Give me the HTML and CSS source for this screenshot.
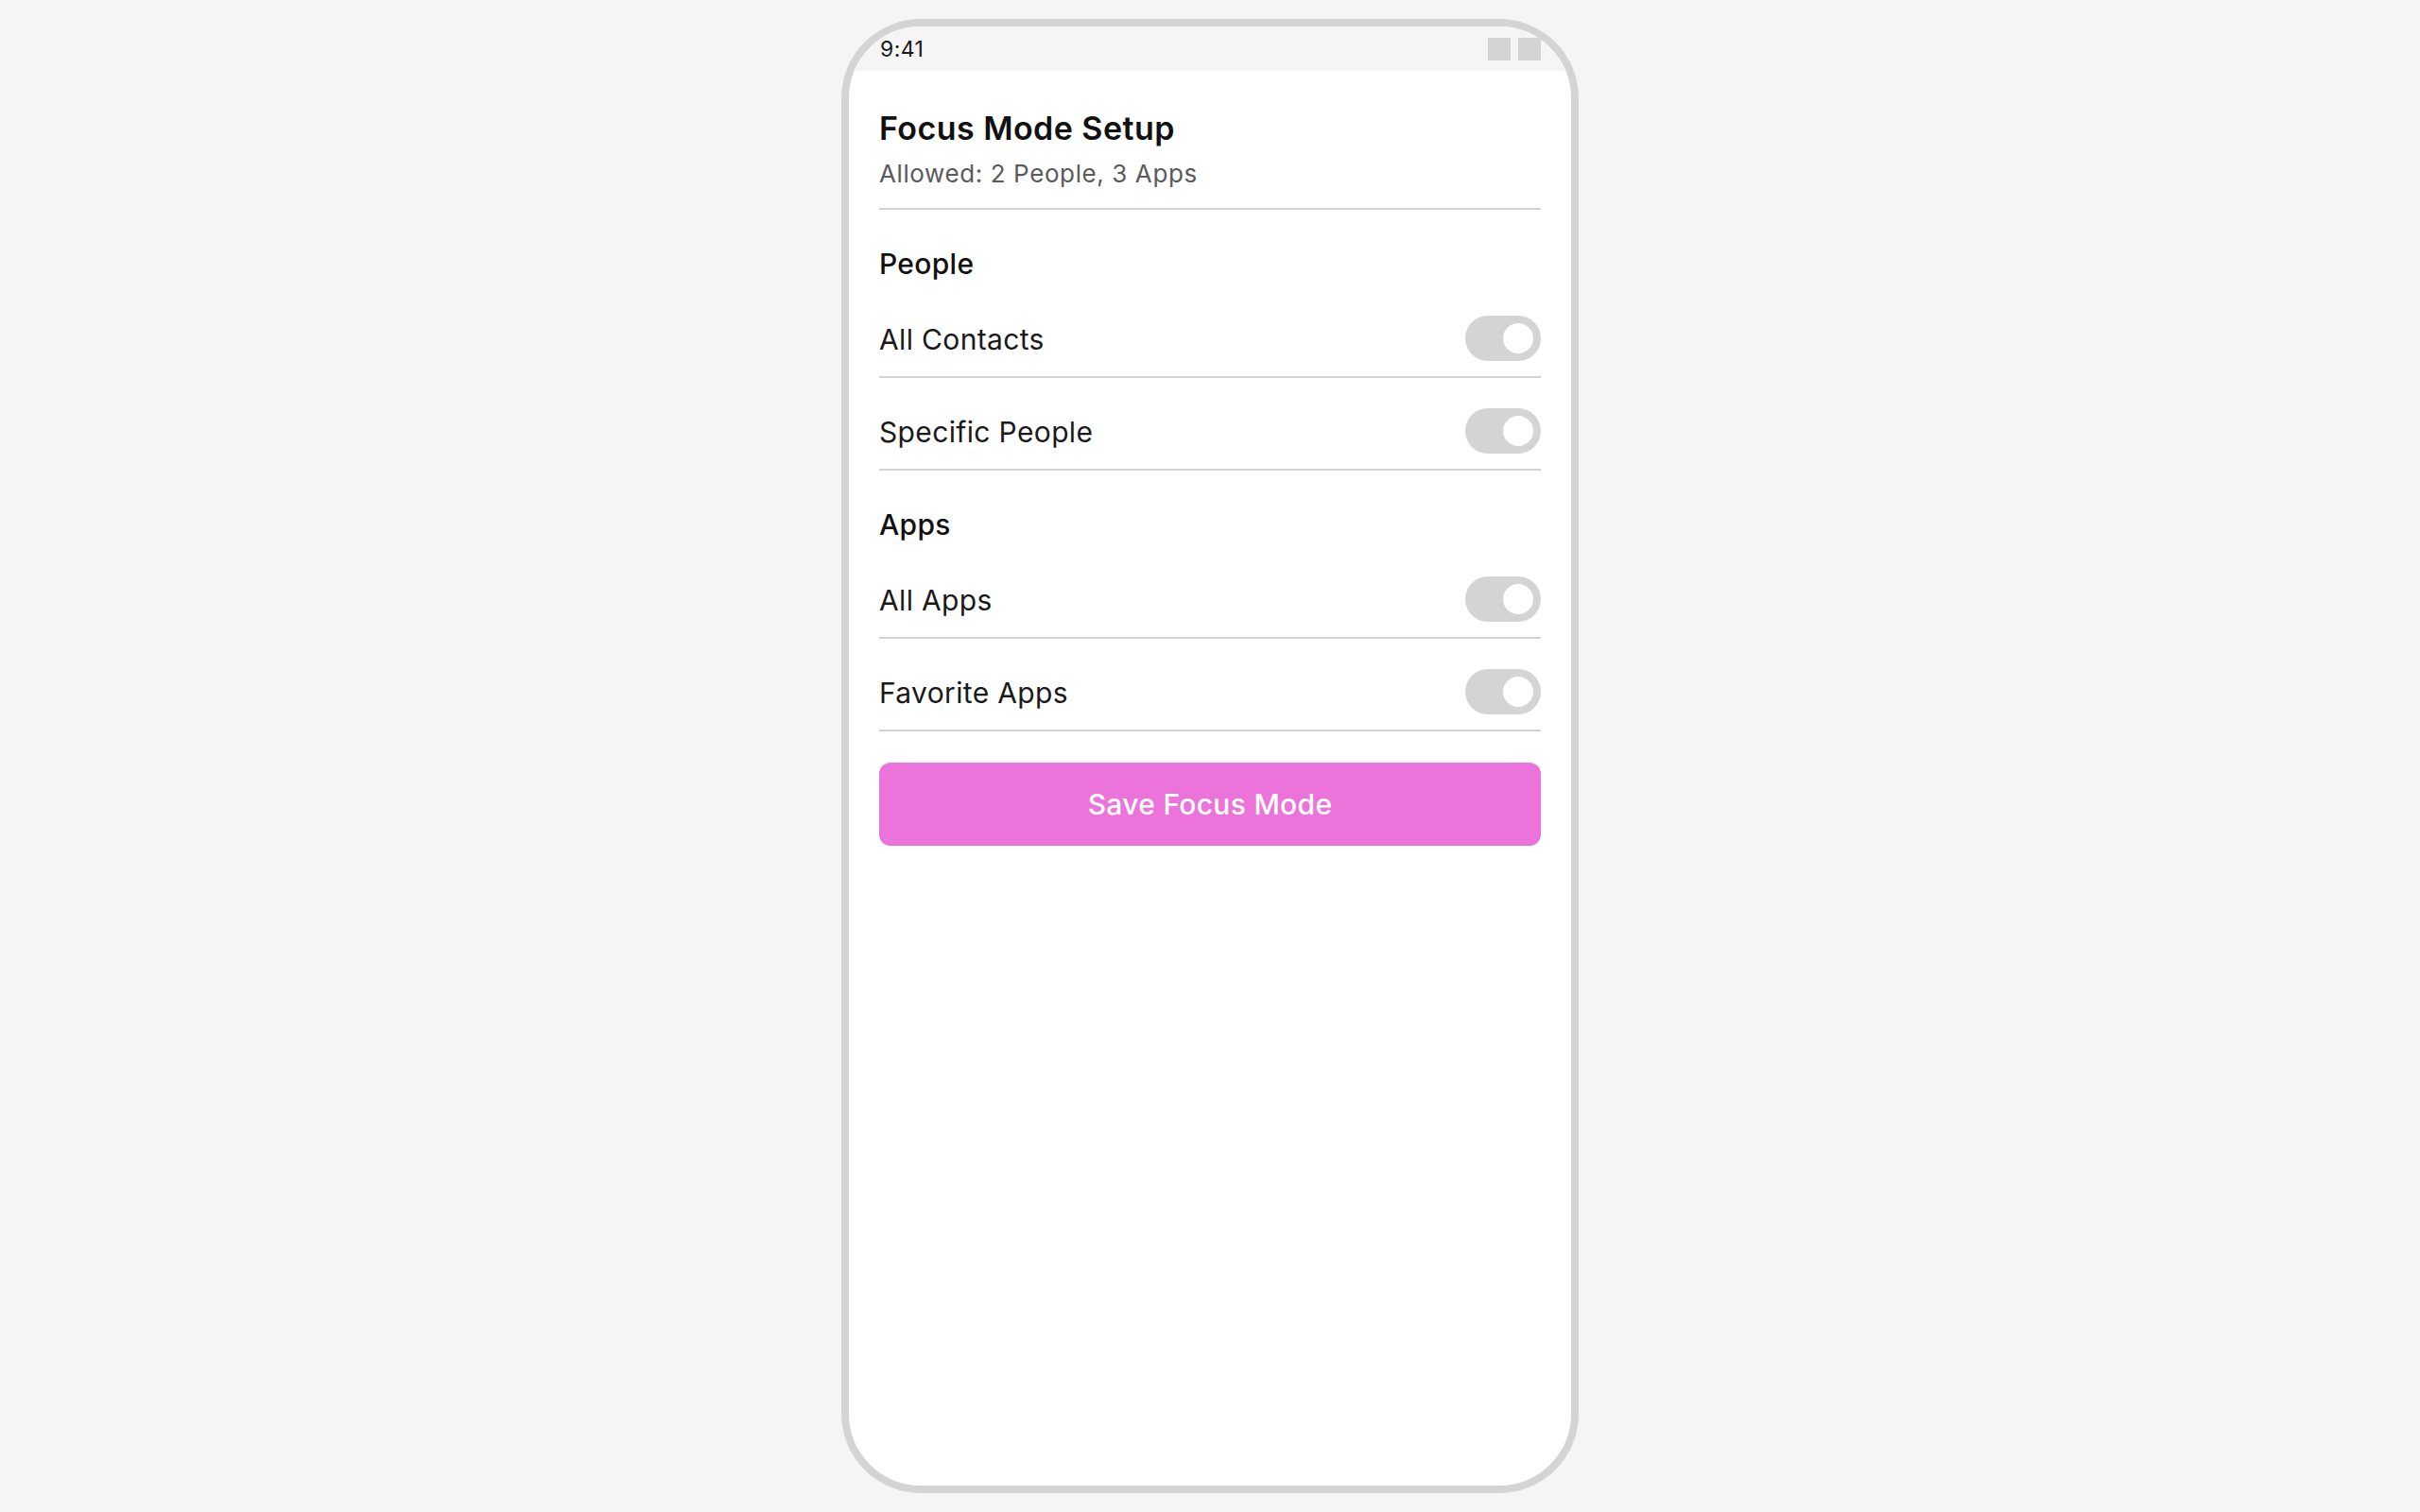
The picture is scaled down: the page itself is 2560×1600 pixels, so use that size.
FILE: index.html
```html
<!DOCTYPE html>
<html lang="en">
<head>
<meta charset="utf-8">
<title>Focus Mode Setup</title>
<link rel="stylesheet" href="styles.css">
</head>
<body>
<div class="phone">
  <div class="status-bar">
    <span class="time">9:41</span>
    <div class="status-icons">
      <span class="status-square"></span>
      <span class="status-square"></span>
    </div>
  </div>
  <div class="content">
    <header class="header">
      <h1 class="title">Focus Mode Setup</h1>
      <p class="subtitle">Allowed: 2 People, 3 Apps</p>
    </header>

    <section class="section">
      <h2 class="section-title">People</h2>
      <div class="row">
        <span class="row-label">All Contacts</span>
        <span class="toggle"><span class="knob"></span></span>
      </div>
      <div class="row">
        <span class="row-label">Specific People</span>
        <span class="toggle"><span class="knob"></span></span>
      </div>
    </section>

    <section class="section">
      <h2 class="section-title">Apps</h2>
      <div class="row">
        <span class="row-label">All Apps</span>
        <span class="toggle"><span class="knob"></span></span>
      </div>
      <div class="row">
        <span class="row-label">Favorite Apps</span>
        <span class="toggle"><span class="knob"></span></span>
      </div>
    </section>

    <button class="save-button" type="button">Save Focus Mode</button>
  </div>
</div>
</body>
</html>
```

FILE: styles.css
```css
* {
  box-sizing: border-box;
}

html, body {
  margin: 0;
  padding: 0;
}

body {
  background: #f5f5f5;
  font-family: Inter, "Noto Sans", "Liberation Sans", sans-serif;
  color: #1a1a1a;
  height: 1600px;
  display: flex;
  align-items: center;
  justify-content: center;
}

.phone {
  width: 780px;
  height: 1560px;
  border: 8px solid #d4d4d4;
  border-radius: 84px;
  background: #ffffff;
  overflow: hidden;
  display: flex;
  flex-direction: column;
}

.status-bar {
  height: 47px;
  flex: 0 0 47px;
  background: #f5f5f5;
  display: flex;
  align-items: center;
  justify-content: space-between;
  padding: 0 32px 0 33px;
}

.time {
  font-size: 23px;
  line-height: 28px;
  letter-spacing: 0.4px;
  color: #1a1a1a;
}

.status-icons {
  display: flex;
  gap: 8px;
}

.status-square {
  width: 24px;
  height: 24px;
  background: #d4d4d4;
}

.content {
  padding: 41px 32px 0 32px;
  display: flex;
  flex-direction: column;
}

.header {
  padding-bottom: 20px;
  border-bottom: 2px solid #d4d4d4;
}

.title {
  margin: 0;
  font-size: 34px;
  line-height: 40px;
  font-weight: 600;
  letter-spacing: 0.45px;
  color: #111111;
}

.subtitle {
  margin: 12px 0 0 0;
  font-size: 26px;
  line-height: 32px;
  letter-spacing: 0.6px;
  color: #5a5a5a;
}

.section {
  margin-top: 35px;
  display: flex;
  flex-direction: column;
  gap: 16px;
}

.section-title {
  margin: 0;
  font-size: 30px;
  line-height: 45px;
  font-weight: 500;
  letter-spacing: 0.3px;
  color: #111111;
}

.row {
  display: flex;
  align-items: center;
  justify-content: space-between;
  padding: 16px 0;
  border-bottom: 2px solid #d4d4d4;
}

.row-label {
  font-size: 30px;
  line-height: 45px;
  letter-spacing: 0.35px;
  color: #1a1a1a;
  position: relative;
  top: 1px;
}

.toggle {
  width: 80px;
  height: 48px;
  border-radius: 24px;
  background: #d4d4d4;
  display: flex;
  align-items: center;
  justify-content: flex-end;
  padding-right: 8px;
}

.knob {
  width: 32px;
  height: 32px;
  border-radius: 50%;
  background: #ffffff;
}

.save-button {
  margin-top: 33px;
  height: 88px;
  border: none;
  border-radius: 12px;
  background: #ec73da;
  color: #ffffff;
  font-family: Inter, "Noto Sans", "Liberation Sans", sans-serif;
  font-size: 30px;
  font-weight: 500;
  letter-spacing: 0.3px;
  cursor: pointer;
}
```
